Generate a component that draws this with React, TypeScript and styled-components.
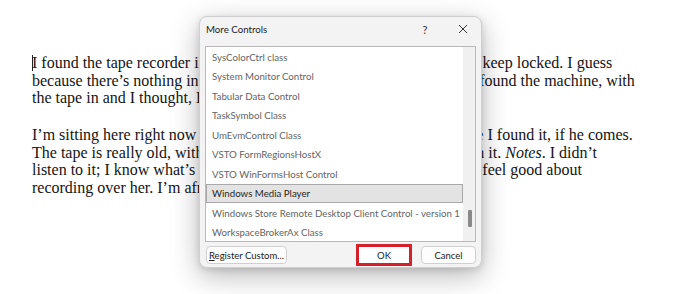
import React from 'react';
import styled, { createGlobalStyle } from 'styled-components';

const GlobalStyle = createGlobalStyle`
  html, body {
    margin: 0;
    padding: 0;
    background: #ffffff;
  }
  body {
    width: 700px;
    height: 294px;
    overflow: hidden;
  }
`;

const Page = styled.div`
  position: relative;
  width: 700px;
  height: 294px;
  background: #fff;
  overflow: hidden;
`;

const Document = styled.div`
  padding: 54px 0 0 32px;
  font-family: "Liberation Serif", "Times New Roman", serif;
  font-size: 16px;
  line-height: 17.5px;
  color: #141414;
`;

const Paragraph = styled.div`
  margin-bottom: 19.5px;
`;

const Line = styled.div`
  white-space: nowrap;
`;

const Caret = styled.span`
  display: inline-block;
  width: 1px;
  height: 16px;
  margin-right: -1px;
  vertical-align: -3px;
  background: #222;
`;

const Dialog = styled.div`
  position: absolute;
  left: 199px;
  top: 16px;
  width: 283px;
  height: 252px;
  box-sizing: border-box;
  background: #f3f3f3;
  border: 1px solid #cfcfcf;
  border-radius: 8px;
  box-shadow: 0 8px 28px rgba(0, 0, 0, 0.28), 0 2px 6px rgba(0, 0, 0, 0.12);
  font-family: Lato, "Noto Sans", sans-serif;
  font-size: 9.7px;
  color: #1a1a1a;
  display: flex;
  flex-direction: column;
`;

const TitleBar = styled.div`
  height: 24px;
  display: flex;
  align-items: center;
  padding: 0 9px 0 6px;
  gap: 20px;
`;

const Title = styled.div`
  flex: 1;
  font-size: 9.7px;
  color: #1b1b1b;
`;

const TitleButton = styled.div`
  width: 18px;
  display: flex;
  justify-content: center;
  align-items: center;
  color: #333;
  font-size: 11px;
`;

const ListBox = styled.div`
  margin: 5px 5px 0 5px;
  height: 196px;
  box-sizing: border-box;
  background: #fff;
  border: 1px solid #b9b9b9;
  display: flex;
`;

const Items = styled.div`
  flex: 1;
  min-width: 0;
  overflow: hidden;
  display: flex;
  flex-direction: column;
`;

const Item = styled.div<{ $selected?: boolean }>`
  height: 19.5px;
  flex-shrink: 0;
  box-sizing: border-box;
  display: flex;
  align-items: center;
  padding-left: 5px;
  white-space: nowrap;
  color: ${(p) => (p.$selected ? '#262626' : '#646464')};
  background: ${(p) => (p.$selected ? '#e3e3e3' : 'transparent')};
  border: 1px solid ${(p) => (p.$selected ? '#a9a9a9' : 'transparent')};
`;

const ScrollTrack = styled.div`
  width: 12px;
  flex-shrink: 0;
  background: #f0f0f0;
  position: relative;
`;

const ScrollThumb = styled.div`
  position: absolute;
  left: 5px;
  top: 163px;
  width: 4px;
  height: 17px;
  border-radius: 1px;
  background: #8a8a8a;
`;

const Footer = styled.div`
  display: flex;
  align-items: center;
  padding: 2px 5px 0 6px;
  gap: 9px;
`;

const Button = styled.div<{ $w: number }>`
  width: ${(p) => p.$w}px;
  height: 18px;
  box-sizing: border-box;
  background: #fdfdfd;
  border: 1px solid #d0d0d0;
  border-radius: 4px;
  display: flex;
  align-items: center;
  justify-content: center;
  white-space: nowrap;
  font-size: 9.5px;
  color: #1c1c1c;
`;

const Spacer = styled.div`
  flex: 1;
`;

const Highlight = styled.div`
  width: 56px;
  height: 22px;
  box-sizing: border-box;
  border: 3px solid #d3202a;
  display: flex;
  align-items: center;
  justify-content: center;
  background: #fff;
  font-size: 9.5px;
  color: #1c1c1c;
`;

const Underlined = styled.span`
  text-decoration: underline;
`;

const items = [
  'SysColorCtrl class',
  'System Monitor Control',
  'Tabular Data Control',
  'TaskSymbol Class',
  'UmEvmControl Class',
  'VSTO FormRegionsHostX',
  'VSTO WinFormsHost Control',
  'Windows Media Player',
  'Windows Store Remote Desktop Client Control - version 1',
  'WorkspaceBrokerAx Class',
];

export default function App() {
  return (
    <Page>
      <GlobalStyle />
      <Document>
        <Paragraph>
          <Line>
            <Caret />I found the tape recorder in the back of Dad’s den, in a box he used to keep locked. I guess
          </Line>
          <Line>because there’s nothing in here he needs to hide any more. Anyway, I found the machine, with</Line>
          <Line>the tape in and I thought, Hey, why not.</Line>
        </Paragraph>
        <Paragraph>
          <Line>I’m sitting here right now in his seat, at his desk, putting it back where I found it, if he comes.</Line>
          <Line>
            The tape is really old, with a label that has Mom’s neat handwriting on it. <i>Notes</i>. I didn’t
          </Line>
          <Line>listen to it; I know what’s on it, more or less, and honestly I still don’t feel good about</Line>
          <Line>recording over her. I’m afraid he will know.</Line>
        </Paragraph>
      </Document>

      <Dialog>
        <TitleBar>
          <Title>More Controls</Title>
          <TitleButton>?</TitleButton>
          <TitleButton>
            <svg width="10" height="10" viewBox="0 0 10 10">
              <path d="M1 1 L9 9 M9 1 L1 9" stroke="#333" strokeWidth="1" fill="none" />
            </svg>
          </TitleButton>
        </TitleBar>
        <ListBox>
          <Items>
            {items.map((t) => (
              <Item key={t} $selected={t === 'Windows Media Player'}>
                {t}
              </Item>
            ))}
          </Items>
          <ScrollTrack>
            <ScrollThumb />
          </ScrollTrack>
        </ListBox>
        <Footer>
          <Button $w={81}>
            <span>
              <Underlined>R</Underlined>egister Custom...
            </span>
          </Button>
          <Spacer />
          <Highlight>OK</Highlight>
          <Button $w={55}>Cancel</Button>
        </Footer>
      </Dialog>
    </Page>
  );
}
